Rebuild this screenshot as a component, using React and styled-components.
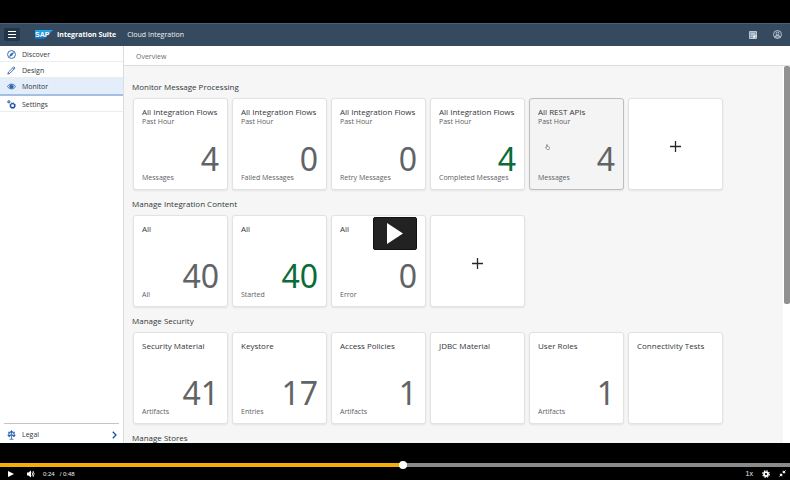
import React from "react";
import styled, { createGlobalStyle, css } from "styled-components";

const GlobalStyle = createGlobalStyle`
  *, *::before, *::after { box-sizing: border-box; }
  body { margin: 0; background: #000; }
  body, button, input { font-family: "Open Sans", "Noto Sans", sans-serif; }
  button { margin: 0; padding: 0; border: 0; background: none; color: inherit; text-align: left; cursor: pointer; }
  h2, h3, p { margin: 0; font-weight: 400; }
`;

const Player = styled.div`
  display: flex;
  flex-direction: column;
  height: 100vh;
  background: #000;
`;

const Stage = styled.div`
  position: relative;
  flex: 1;
  min-height: 0;
  margin-top: 23px;
  display: flex;
  flex-direction: column;
  background: #fff;
  color: #32363a;
`;

const ShellBar = styled.header`
  display: flex;
  align-items: center;
  flex: none;
  height: 23px;
  padding: 0 8px 0 4px;
  background: #354a5f;
  box-shadow: inset 0 1px #4c6178;
  color: #eef2f6;
  font-size: 7px;
`;

const MenuButton = styled.button`
  display: grid;
  place-items: center;
  width: 16px;
  height: 13px;
  margin-right: 15px;
  border-radius: 2px;
  background: #233649;
`;

const Product = styled.strong`
  margin: 0 11px 0 4px;
  font-weight: 700;
  color: #fff;
`;

const ShellActions = styled.div`
  display: flex;
  gap: 16px;
  margin-left: auto;
`;

const IconButton = styled.button`
  display: grid;
  place-items: center;
`;

const Body = styled.div`
  display: flex;
  flex: 1;
  min-height: 0;
`;

const Sidebar = styled.nav`
  display: flex;
  flex-direction: column;
  flex: none;
  width: 124px;
  border-right: 1px solid #dcdcdc;
`;

const NavItem = styled.a`
  display: flex;
  align-items: center;
  gap: 6px;
  height: 16px;
  padding: 1px 5px 0 7px;
  border-bottom: 1px solid #ededed;
  color: #32363a;
  font-size: 7px;
  text-decoration: none;
  ${(p) =>
    p.$selected &&
    css`
      height: 18px;
      background: #e3eefa;
      border-bottom: 2px solid #a5bfe0;
    `}
`;

const NavFooter = styled.div`
  margin: auto 4px 0 4px;
  border-top: 1px solid #c4c4c4;
  padding: 2px 0 1px;
  a { border: 0; padding: 1px 2px 0 3px; }
  a svg:last-child { margin-left: auto; }
`;

const Main = styled.main`
  display: flex;
  flex-direction: column;
  flex: 1;
  min-width: 0;
`;

const PageHeader = styled.div`
  display: flex;
  align-items: center;
  flex: none;
  height: 20px;
  padding: 1px 12px 0;
  border-bottom: 1px solid #dcdcdc;
  color: #6a6d70;
  font-size: 7px;
`;

const Scroller = styled.div`
  display: flex;
  flex: 1;
  min-height: 0;
`;

const Content = styled.div`
  flex: 1;
  min-width: 0;
  overflow: hidden;
  padding: 14px 8px 0;
  background: #f6f6f6;
`;

const ScrollTrack = styled.div`
  flex: none;
  width: 7px;
  padding-left: 1px;
  background: #fff;
`;

const ScrollThumb = styled.div`
  height: 63%;
  border-radius: 2px;
  background: #919191;
`;

const Section = styled.section`
  margin-bottom: 7px;
`;

const SectionTitle = styled.h2`
  margin-bottom: 5px;
  font-size: 8px;
  line-height: 13px;
`;

const TileRow = styled.div`
  display: flex;
  gap: 4px;
  padding-left: 1px;
`;

const Tile = styled.button`
  display: flex;
  flex-direction: column;
  width: 95px;
  height: 92px;
  padding: 7px 8px;
  border: 1px solid ${(p) => (p.$hovered ? "#bdbdbd" : "#e2e2e2")};
  border-radius: 3px;
  background: ${(p) => (p.$hovered ? "#f4f4f4" : "#fff")};
  box-shadow: 0 1px 2px rgba(0, 0, 0, 0.08);
  color: #32363a;
`;

const AddTile = styled(Tile)`
  align-items: center;
  justify-content: center;
  padding: 4px 0 0;
`;

const TileTitle = styled.h3`
  font-size: 8px;
  line-height: 12px;
  white-space: nowrap;
`;

const TileSubtitle = styled.p`
  color: #5c6064;
  font-size: 7px;
  line-height: 8px;
`;

const TileValue = styled.p`
  margin-top: auto;
  align-self: flex-end;
  color: ${(p) => (p.$positive ? "#0a6b38" : "#616467")};
  font-family: "Noto Sans", "Open Sans", sans-serif;
  font-size: 32px;
  line-height: 30px;
`;

const TileFooter = styled.p`
  color: #5c6064;
  font-size: 7px;
  line-height: 8px;
`;

const HandCursor = styled.svg`
  position: absolute;
  left: 16px;
  top: 46px;
`;

const TileSlot = styled.div`
  position: relative;
`;

const PlayOverlay = styled.div`
  position: absolute;
  inset: 0;
  display: grid;
  place-items: center;
  pointer-events: none;
`;

const BigPlay = styled.button`
  display: grid;
  place-items: center;
  width: 44px;
  height: 33px;
  border: 1px solid #111;
  border-radius: 2px;
  background: #222;
  pointer-events: auto;
`;

const Controls = styled.div`
  flex: none;
  padding-top: 18px;
  height: 37px;
  color: #eee;
`;

const Seek = styled.input`
  display: block;
  appearance: none;
  width: 100%;
  height: 8px;
  margin: 0;
  background: linear-gradient(90deg, #f6ad05 51%, #8b8b8b 51%) center / 100% 4px no-repeat;
  &::-webkit-slider-thumb {
    appearance: none;
    width: 8px;
    height: 8px;
    border-radius: 50%;
    background: #fff;
  }
`;

const ControlRow = styled.div`
  display: flex;
  align-items: center;
  height: 9px;
  padding: 0 4px 0 8px;
`;

const TimeLabel = styled.span`
  margin-left: 8px;
  font-family: "Liberation Sans", Arial, sans-serif;
  font-size: 6px;
  white-space: pre;
`;

const ControlGroup = styled.div`
  display: flex;
  align-items: center;
  gap: ${(p) => p.$gap}px;
  margin-left: ${(p) => (p.$end ? "auto" : "0")};
`;

const TextButton = styled.button`
  && { font-family: "Liberation Sans", Arial, sans-serif; }
  font-size: 7px;
`;

const CompassIcon = () => (
  <svg width="9" height="9" viewBox="0 0 16 16" fill="none" stroke="#265fae" strokeWidth="1.6">
    <circle cx="8" cy="8" r="7" />
    <path d="M12 4 9.4 9.4 4 12l2.6-5.4z" fill="#265fae" strokeWidth=".6" />
  </svg>
);
const PencilIcon = () => (
  <svg width="9" height="9" viewBox="0 0 16 16" fill="none" stroke="#265fae" strokeWidth="1.5">
    <path d="m1.5 14.5 1.2-3.9L12 1.500l2.200 2.200-9 9.400zM10 3.400l2.300 2.300" />
  </svg>
);
const EyeIcon = () => (
  <svg width="9" height="9" viewBox="0 0 16 16" fill="none" stroke="#265fae" strokeWidth="1.5">
    <path d="M.8 8C4 2.4 12 2.4 15.2 8 12 13.6 4 13.6.8 8z" />
    <circle cx="8" cy="8" r="3.2" fill="#265fae" />
    <circle cx="9" cy="6.9" r=".8" fill="#fff" stroke="none" />
  </svg>
);
const GearsIcon = () => (
  <svg width="9" height="9" viewBox="0 0 16 16" fill="none" stroke="#184f9d">
    <circle cx="10" cy="10" r="3.6" strokeWidth="2" />
    <circle cx="10" cy="10" r="5" strokeWidth="1.6" strokeDasharray="2 1.9" />
    <circle cx="3.2" cy="3.2" r="1.6" strokeWidth="1.7" />
    <circle cx="3.2" cy="3.2" r="2.6" strokeWidth="1" strokeDasharray="1.2 1.2" />
  </svg>
);
const ScalesIcon = () => (
  <svg width="9" height="10" viewBox="0 0 16 20" fill="none" stroke="#265fae" strokeWidth="1.6">
    <path d="M8 1v17M4 18.5h8M1 4.5h14M3.5 4.5 1 11h5zM12.5 4.5 10 11h5z" />
    <path d="M1 11c.5 2.6 4.5 2.6 5 0zM10 11c.5 2.6 4.5 2.6 5 0z" fill="#265fae" />
    <circle cx="8" cy="3.5" r="1.6" fill="#265fae" />
  </svg>
);
const ChevronIcon = () => (
  <svg width="5" height="8" viewBox="0 0 5 8" fill="none" stroke="#174f9e" strokeWidth="1.3">
    <path d="m.8.8 3.2 3.2L.8 7.2" />
  </svg>
);
const PlusIcon = () => (
  <svg width="11" height="11" viewBox="0 0 11 11" stroke="#25282b" strokeWidth="1.3">
    <path d="M5.5 0v11M0 5.5h11" />
  </svg>
);
const SapLogo = () => (
  <svg width="18" height="9" viewBox="0 0 36 18" role="img" aria-label="SAP">
    <defs>
      <linearGradient id="sap" x1="0" x2="0" y1="0" y2="1">
        <stop offset="0" stopColor="#20aeee" />
        <stop offset="1" stopColor="#1769c5" />
      </linearGradient>
    </defs>
    <path d="M0 0h36L18 18H0z" fill="url(#sap)" />
    <text x="0" y="14" fill="#fff" fontFamily="Liberation Sans, Arial, sans-serif" fontWeight="700" fontSize="14">
      SAP
    </text>
  </svg>
);

const NAV = [
  { label: "Discover", Icon: CompassIcon },
  { label: "Design", Icon: PencilIcon },
  { label: "Monitor", Icon: EyeIcon, selected: true },
  { label: "Settings", Icon: GearsIcon },
];

const flow = "All Integration Flows";
const hour = "Past Hour";
const SECTIONS = [
  {
    title: "Monitor Message Processing",
    addable: true,
    tiles: [
      { title: flow, subtitle: hour, value: 4, footer: "Messages" },
      { title: flow, subtitle: hour, value: 0, footer: "Failed Messages" },
      { title: flow, subtitle: hour, value: 0, footer: "Retry Messages" },
      { title: flow, subtitle: hour, value: 4, footer: "Completed Messages", positive: true },
      { title: "All REST APIs", subtitle: hour, value: 4, footer: "Messages", hovered: true },
    ],
  },
  {
    title: "Manage Integration Content",
    addable: true,
    tiles: [
      { title: "All", value: 40, footer: "All" },
      { title: "All", value: 40, footer: "Started", positive: true },
      { title: "All", value: 0, footer: "Error" },
    ],
  },
  {
    title: "Manage Security",
    tiles: [
      { title: "Security Material", value: 41, footer: "Artifacts" },
      { title: "Keystore", value: 17, footer: "Entries" },
      { title: "Access Policies", value: 1, footer: "Artifacts" },
      { title: "JDBC Material" },
      { title: "User Roles", value: 1, footer: "Artifacts" },
      { title: "Connectivity Tests" },
    ],
  },
  { title: "Manage Stores", tiles: [] },
];

function MetricTile({ title, subtitle, value, footer, positive, hovered }) {
  return (
    <TileSlot>
      <Tile $hovered={hovered}>
        <TileTitle>{title}</TileTitle>
        {subtitle && <TileSubtitle>{subtitle}</TileSubtitle>}
        {value !== undefined && <TileValue $positive={positive}>{value}</TileValue>}
        {footer && <TileFooter>{footer}</TileFooter>}
      </Tile>
      {hovered && (
        <HandCursor width="5" height="6" viewBox="0 0 10 12" fill="#fff" stroke="#666" strokeWidth="1.2">
          <path d="M3 7V1.5q1-1.5 2 0V5l3 .5q1.5.5 1 2.5L8 11H4L1 7q0-1.500 2 0z" />
        </HandCursor>
      )}
    </TileSlot>
  );
}

export default function App() {
  return (
    <>
      <GlobalStyle />
      <Player>
        <Stage>
          <ShellBar>
            <MenuButton aria-label="Menu">
              <svg width="8" height="7" viewBox="0 0 8 7" stroke="#fff">
                <path d="M0 .5h8M0 3.5h8M0 6.5h8" />
              </svg>
            </MenuButton>
            <SapLogo />
            <Product>Integration Suite</Product>
            <span>Cloud Integration</span>
            <ShellActions>
              <IconButton aria-label="Notes">
                <svg width="8" height="8" viewBox="0 0 16 16" fill="#8498ad" stroke="#d6e1ec" strokeWidth="1.5">
                  <path d="M1 1h14v14H1z" />
                  <path d="M3.5 4.5h9M3.5 7.5h9M3.5 10.5h4" />
                  <path d="M9 15V9.500h6z" fill="#eef3f8" />
                </svg>
              </IconButton>
              <IconButton aria-label="Account">
                <svg width="9" height="9" viewBox="0 0 18 18" fill="none" stroke="#d6e1ec" strokeWidth="1.6">
                  <circle cx="9" cy="9" r="8" />
                  <circle cx="9" cy="7" r="2.8" />
                  <path d="M4.5 14V12q4.5-3.5 9 0v2z" />
                </svg>
              </IconButton>
            </ShellActions>
          </ShellBar>
          <Body>
            <Sidebar aria-label="Main">
              {NAV.map(({ label, Icon, selected }) => (
                <NavItem key={label} href="#" $selected={selected}>
                  <Icon />
                  {label}
                </NavItem>
              ))}
              <NavFooter>
                <NavItem href="#">
                  <ScalesIcon />
                  Legal
                  <ChevronIcon />
                </NavItem>
              </NavFooter>
            </Sidebar>
            <Main>
              <PageHeader>Overview</PageHeader>
              <Scroller>
                <Content>
                  {SECTIONS.map((section) => (
                    <Section key={section.title}>
                      <SectionTitle>{section.title}</SectionTitle>
                      <TileRow>
                        {section.tiles.map((tile, i) => (
                          <MetricTile key={i} {...tile} />
                        ))}
                        {section.addable && (
                          <AddTile aria-label="Add tile">
                            <PlusIcon />
                          </AddTile>
                        )}
                      </TileRow>
                    </Section>
                  ))}
                </Content>
                <ScrollTrack>
                  <ScrollThumb />
                </ScrollTrack>
              </Scroller>
            </Main>
          </Body>
          <PlayOverlay>
            <BigPlay aria-label="Play video">
              <svg width="16" height="21" viewBox="0 0 16 21" fill="#fff">
                <path d="M0 0v21l16-10.5z" />
              </svg>
            </BigPlay>
          </PlayOverlay>
        </Stage>
        <Controls>
          <Seek type="range" min="0" max="100" defaultValue="51" aria-label="Seek" />
          <ControlRow>
            <ControlGroup $gap={13}>
              <IconButton aria-label="Play">
                <svg width="6" height="6" viewBox="0 0 6 6" fill="#fff">
                  <path d="M0 0v6l6-3z" />
                </svg>
              </IconButton>
              <IconButton aria-label="Mute">
                <svg width="8" height="8" viewBox="0 0 16 16" fill="#fff">
                  <path d="M0 5h3l5-4v14l-5-4H0z" />
                  <path d="M10 4.5q3 3.5 0 7M12 2q4.500 6 0 12" fill="none" stroke="#fff" strokeWidth="1.7" />
                </svg>
              </IconButton>
            </ControlGroup>
            <TimeLabel>0:24   / 0:48</TimeLabel>
            <ControlGroup $gap={9} $end>
              <TextButton aria-label="Playback speed">1x</TextButton>
              <IconButton aria-label="Settings">
                <svg width="8" height="8" viewBox="0 0 16 16" fill="none" stroke="#fff">
                  <circle cx="8" cy="8" r="4" strokeWidth="3.5" />
                  <circle cx="8" cy="8" r="6.5" strokeWidth="2.4" strokeDasharray="2.9 2.2" />
                </svg>
              </IconButton>
              <IconButton aria-label="Exit full screen">
                <svg width="7" height="7" viewBox="0 0 14 14" fill="#fff" stroke="#fff" strokeWidth="2">
                  <path d="M8 1.5V6h4.5zM1.5 8H6v4.5z" strokeWidth="1" />
                  <path d="m9 5 4-4M5 9l-4 4" />
                </svg>
              </IconButton>
            </ControlGroup>
          </ControlRow>
        </Controls>
      </Player>
    </>
  );
}
